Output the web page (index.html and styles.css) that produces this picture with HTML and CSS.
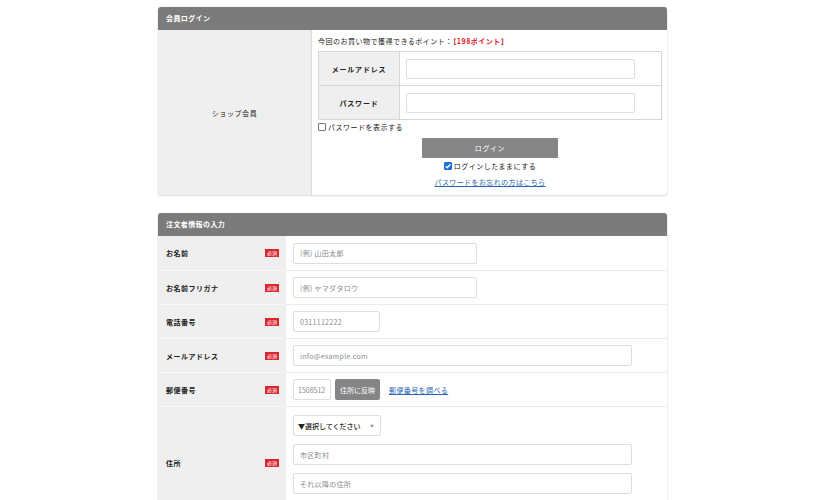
FILE: index.html
```html
<!DOCTYPE html>
<html lang="ja">
<head>
<meta charset="utf-8">
<link rel="stylesheet" href="styles.css">
</head>
<body>
<div class="page">
  <section class="panel">
    <div class="panel-head">会員ログイン</div>
    <div class="login-body">
      <div class="login-label">ショップ会員</div>
      <div class="login-main">
        <p class="points">今回のお買い物で獲得できるポイント：<span class="pt">【198ポイント】</span></p>
        <div class="inner-table">
          <div class="inner-row">
            <div class="inner-label">メールアドレス</div>
            <div class="inner-value"><input class="field f-login" type="text"></div>
          </div>
          <div class="inner-row">
            <div class="inner-label">パスワード</div>
            <div class="inner-value"><input class="field f-login" type="password"></div>
          </div>
        </div>
        <label class="check-line"><span class="cbox"></span>パスワードを表示する</label>
        <div class="login-actions">
          <button class="btn-login" type="button">ログイン</button>
          <label class="check-line center"><span class="cbox checked"><svg viewBox="0 0 8 8" width="8" height="8"><path d="M1.6 4.2 L3.3 5.8 L6.4 2.3" fill="none" stroke="#fff" stroke-width="1.3"/></svg></span>ログインしたままにする</label>
          <a class="link" href="#">パスワードをお忘れの方はこちら</a>
        </div>
      </div>
    </div>
  </section>

  <section class="panel panel2">
    <div class="panel-head">注文者情報の入力</div>
    <div class="form-row">
      <div class="form-label"><span>お名前</span><span class="req">必須</span></div>
      <div class="form-value"><input class="field f-md" type="text" placeholder="(例) 山田太郎"></div>
    </div>
    <div class="form-row">
      <div class="form-label"><span>お名前フリガナ</span><span class="req">必須</span></div>
      <div class="form-value"><input class="field f-md" type="text" placeholder="(例) ヤマダタロウ"></div>
    </div>
    <div class="form-row">
      <div class="form-label"><span>電話番号</span><span class="req">必須</span></div>
      <div class="form-value"><input class="field f-sm" type="text" placeholder="0311112222"></div>
    </div>
    <div class="form-row">
      <div class="form-label"><span>メールアドレス</span><span class="req">必須</span></div>
      <div class="form-value"><input class="field f-lg" type="text" placeholder="info@example.com"></div>
    </div>
    <div class="form-row">
      <div class="form-label"><span>郵便番号</span><span class="req">必須</span></div>
      <div class="form-value zip">
        <input class="field f-zip" type="text" placeholder="1508512">
        <button class="btn-zip" type="button">住所に反映</button>
        <a class="link" href="#">郵便番号を調べる</a>
      </div>
    </div>
    <div class="form-row addr">
      <div class="form-label"><span>住所</span><span class="req">必須</span></div>
      <div class="form-value stack">
        <div class="select"><span>▼選択してください</span><span class="caret">▼</span></div>
        <input class="field f-lg" type="text" placeholder="市区町村">
        <input class="field f-lg" type="text" placeholder="それ以降の住所">
      </div>
    </div>
  </section>
</div>
</body>
</html>
```

FILE: styles.css
```css
* { box-sizing: border-box; }
html, body { margin: 0; padding: 0; background: #fff; }
body {
  font-family: "Noto Sans CJK JP", "Noto Sans", sans-serif;
  font-size: 7px;
  color: #222;
  overflow: hidden;
}
.page {
  width: 509px;
  margin-left: 158px;
  padding-top: 7px;
}
.panel {
  background: #fff;
  border-radius: 3px;
  box-shadow: 0 0 1px rgba(0,0,0,0.25), 0 1px 2px rgba(0,0,0,0.12);
  overflow: hidden;
}
.panel2 { margin-top: 18px; }
.panel-head {
  height: 23px;
  background: #7b7b7b;
  color: #fff;
  font-weight: 700;
  line-height: 23px;
  padding-left: 8px;
  letter-spacing: 0.4px;
}
.login-body {
  display: grid;
  grid-template-columns: 153px 1fr;
  height: 165px;
}
.login-label {
  background: #efefef;
  display: flex;
  align-items: center;
  justify-content: center;
  letter-spacing: 0.6px;
}
.login-main {
  border-left: 1px solid #dcdcdc;
  padding: 6px 5px 0 6px;
}
.points {
  margin: 0 0 5px;
  line-height: 10px;
  letter-spacing: 0.5px;
}
.pt { color: #e0141e; font-weight: 700; }
.inner-table {
  border: 1px solid #d6d6d6;
}
.inner-row {
  display: flex;
  height: 33px;
}
.inner-row + .inner-row { border-top: 1px solid #d6d6d6; height: 34px; }
.inner-label {
  width: 81px;
  background: #efefef;
  border-right: 1px solid #d6d6d6;
  font-weight: 700;
  display: flex;
  align-items: center;
  justify-content: center;
  letter-spacing: 0.8px;
}
.inner-value {
  display: flex;
  align-items: center;
  padding-left: 6px;
}
.field {
  height: 21px;
  border: 1px solid #dedede;
  border-radius: 2px;
  background: #fff;
  font-family: inherit;
  font-size: 7px;
  padding: 0 6px;
  color: #555;
  outline: none;
  letter-spacing: 0.3px;
}
.field::placeholder { color: #8a8a8a; }
.f-login { width: 229px; height: 20px; }
.f-md { width: 184px; }
.f-sm { width: 87px; }
.f-lg { width: 339px; }
.f-zip { width: 38px; padding: 0 4px; letter-spacing: 0; }
.check-line {
  display: flex;
  align-items: center;
  gap: 2px;
  margin-top: 2px;
  line-height: 10px;
  letter-spacing: 0.5px;
}
.check-line.center { justify-content: center; margin-top: 3px; }
.cbox {
  width: 8px;
  height: 8px;
  border: 1px solid #777;
  border-radius: 1px;
  background: #fff;
  display: inline-flex;
}
.cbox.checked {
  background: #1a6fd8;
  border-color: #1a6fd8;
}
.cbox.checked svg { margin: -1px; }
.login-actions {
  display: flex;
  flex-direction: column;
  align-items: center;
  margin-top: 6px;
}
.btn-login {
  width: 136px;
  height: 20px;
  border: 0;
  background: #858585;
  color: #fff;
  font-family: inherit;
  font-size: 7px;
  letter-spacing: 0.6px;
}
.link {
  color: #2a67b1;
  text-decoration: underline;
  margin-top: 6px;
  letter-spacing: 0.4px;
  line-height: 10px;
}
.form-row {
  display: flex;
  min-height: 34px;
}
.form-label {
  width: 128px;
  background: #efefef;
  border-top: 1px solid #f9f9f9;
  display: flex;
  align-items: center;
  justify-content: space-between;
  padding: 0 7px 0 8px;
  font-weight: 700;
  letter-spacing: 0.5px;
}
.form-value {
  flex: 1;
  display: flex;
  align-items: center;
  padding-left: 7px;
  border-top: 1px solid #ebebeb;
}
.panel-head + .form-row .form-label,
.panel-head + .form-row .form-value { border-top: 0; }
.req {
  background: #d8262f;
  color: #fff;
  font-size: 5px;
  font-weight: 400;
  line-height: 8px;
  padding: 0 2px;
  letter-spacing: 0;
}
.zip { gap: 4px; }
.zip .link { margin: 0 0 0 5px; }
.btn-zip {
  height: 21px;
  width: 45px;
  border: 0;
  border-radius: 2px;
  background: #858585;
  color: #fff;
  font-family: inherit;
  font-size: 7px;
  padding: 0;
}
.addr { min-height: 112px; }
.stack {
  flex-direction: column;
  align-items: flex-start;
  justify-content: flex-start;
  padding-top: 8px;
  gap: 8px;
}
.select {
  width: 88px;
  height: 21px;
  border: 1px solid #dedede;
  border-radius: 2px;
  display: flex;
  align-items: center;
  justify-content: space-between;
  padding: 0 6px 0 4px;
  color: #222;
  font-weight: 500;
}
.caret { color: #999; font-size: 4px; }
```
